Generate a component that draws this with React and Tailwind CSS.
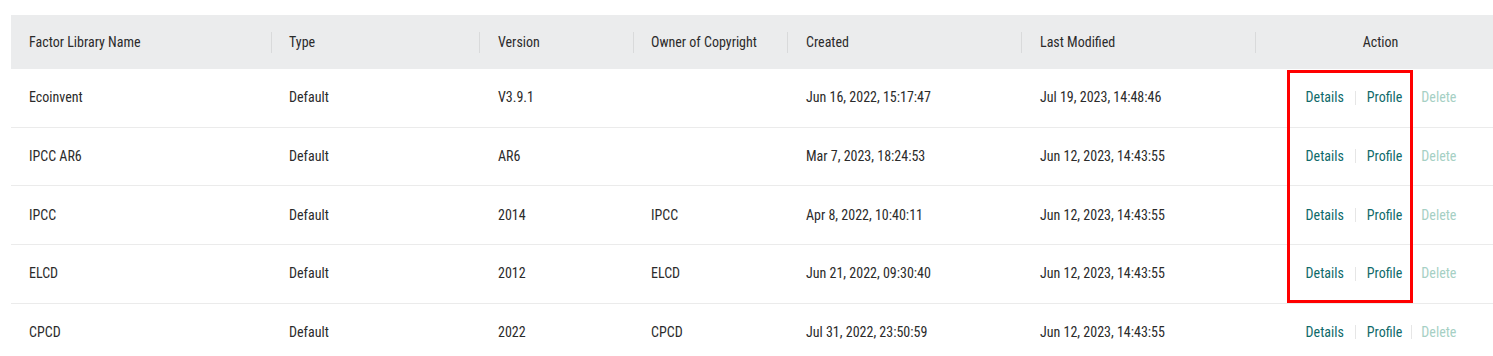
import React from 'react';

const columns = [
  { key: 'name', title: 'Factor Library Name', width: 'w-[261px]', pad: 'pl-[18px]' },
  { key: 'type', title: 'Type', width: 'w-[208px]', pad: 'pl-[17px]' },
  { key: 'version', title: 'Version', width: 'w-[154px]', pad: 'pl-[18px]' },
  { key: 'owner', title: 'Owner of Copyright', width: 'w-[154px]', pad: 'pl-[17px]' },
  { key: 'created', title: 'Created', width: 'w-[234px]', pad: 'pl-[18px]' },
  { key: 'modified', title: 'Last Modified', width: 'w-[234px]', pad: 'pl-[18px]' },
];

const rows = [
  { name: 'Ecoinvent', type: 'Default', version: 'V3.9.1', owner: '', created: 'Jun 16, 2022, 15:17:47', modified: 'Jul 19, 2023, 14:48:46' },
  { name: 'IPCC AR6', type: 'Default', version: 'AR6', owner: '', created: 'Mar 7, 2023, 18:24:53', modified: 'Jun 12, 2023, 14:43:55' },
  { name: 'IPCC', type: 'Default', version: '2014', owner: 'IPCC', created: 'Apr 8, 2022, 10:40:11', modified: 'Jun 12, 2023, 14:43:55' },
  { name: 'ELCD', type: 'Default', version: '2012', owner: 'ELCD', created: 'Jun 21, 2022, 09:30:40', modified: 'Jun 12, 2023, 14:43:55' },
  { name: 'CPCD', type: 'Default', version: '2022', owner: 'CPCD', created: 'Jul 31, 2022, 23:50:59', modified: 'Jun 12, 2023, 14:43:55' },
];

const Actions = () => (
  <div className="flex items-center justify-center pl-[1px]">
    <button type="button" className="text-[#0f6a6a]">Details</button>
    <span className="mx-[11px] h-[14px] w-px bg-[#e6e6e6]" />
    <button type="button" className="text-[#0f6a6a]">Profile</button>
    <span className="mx-[9px] h-[14px] w-px bg-[#e6e6e6]" />
    <button type="button" className="text-[#a6d0c4] cursor-not-allowed">Delete</button>
  </div>
);

const App = () => {
  return (
    <div className="relative h-[356px] w-[1493px] overflow-hidden bg-white pt-[15px] pl-[11px] font-['Roboto',sans-serif] font-stretch-[83%] text-[14px] text-[#2b2b2b]">
      <div className="w-[1494px]">
        {/* header */}
        <div className="flex h-[54px] items-center bg-[#ebeced]">
          {columns.map(col => (
            <div key={col.key} className={`${col.width} flex shrink-0 items-center justify-between`}>
              <span className={col.pad}>{col.title}</span>
              <span className="h-[21px] w-px bg-[#d9dadb]" />
            </div>
          ))}
          <div className="flex-1 text-center">Action</div>
        </div>

        {/* body */}
        {rows.map(row => (
          <div key={row.name} className="flex h-[58.67px] items-center border-b border-[#ebebeb]">
            {columns.map(col => (
              <div key={col.key} className={`${col.width} ${col.pad} shrink-0`}>
                {row[col.key]}
              </div>
            ))}
            <div className="flex-1">
              <Actions />
            </div>
          </div>
        ))}
      </div>

      {/* highlight box */}
      <div className="pointer-events-none absolute left-[1287px] top-[70px] h-[233px] w-[126px] border-[3px] border-[#ff0000]" />
    </div>
  );
};

export default App;
